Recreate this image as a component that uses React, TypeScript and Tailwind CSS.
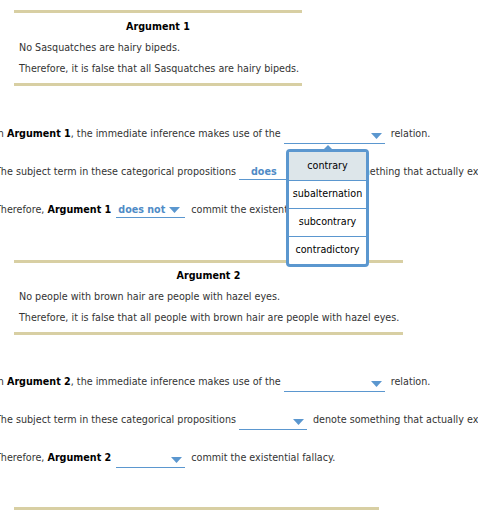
import React from 'react';

const Arrow = () => (
  <svg width="11" height="6" viewBox="0 0 11 6" className="shrink-0">
    <path d="M0 0 H11 L5.5 6 Z" fill="#5b97cf" />
  </svg>
);

type SelectProps = {
  width: string;
  value?: string;
  arrow?: boolean;
};

const Select = ({ width, value, arrow = true }: SelectProps) => (
  <span
    className={`inline-flex items-center h-[15px] border-b border-[#5b97cf] ${width}`}
  >
    <span className="flex-1 pl-[12px] font-bold text-[#4f8bc6]">{value}</span>
    {arrow && (
      <span className="pr-[3px]">
        <Arrow />
      </span>
    )}
  </span>
);

const ArgumentBox = ({
  title,
  lines,
  width,
  top,
}: {
  title: string;
  lines: string[];
  width: string;
  top: string;
}) => (
  <div
    className={`${width} border-y-[3px] border-[#d8cfa3] ${top} pb-[4px] whitespace-nowrap`}
  >
    <div className="h-[20px] leading-[20px] text-center font-bold text-black">
      {title}
    </div>
    {lines.map((l) => (
      <div key={l} className="h-[21px] leading-[21px] pl-[5px]">
        {l}
      </div>
    ))}
  </div>
);

const Row = ({ children }: { children: React.ReactNode }) => (
  <div className="flex items-center h-[38px] whitespace-nowrap ml-[-5px] pt-[1px]">
    {children}
  </div>
);

const options = ['contrary', 'subalternation', 'subcontrary', 'contradictory'];

export default function App() {
  return (
    <div
      className="relative w-[478px] h-[518px] overflow-hidden bg-white text-[9.6px] text-[#333]"
      style={{ fontFamily: '"DejaVu Sans", Verdana, sans-serif' }}
    >
      <div className="pt-[10px] pl-[14px]">
        <ArgumentBox
          width="w-[288px]"
          top="pt-[4px]"
          title="Argument 1"
          lines={[
            'No Sasquatches are hairy bipeds.',
            'Therefore, it is false that all Sasquatches are hairy bipeds.',
          ]}
        />
      </div>

      <div className="mt-[29px]">
        <Row>
          <span>
            In <b className="text-black">Argument 1</b>, the immediate inference makes use of the
          </span>
          <span className="ml-[3px] mr-[6px]">
            <Select width="w-[101px]" />
          </span>
          <span>relation.</span>
        </Row>
        <Row>
          <span>The subject term in these categorical propositions</span>
          <span className="ml-[3px] mr-[6px]">
            <Select width="w-[68px]" value="does" arrow={false} />
          </span>
          <span>denote something that actually exists.</span>
        </Row>
        <Row>
          <span>
            Therefore, <b className="text-black">Argument 1</b>
          </span>
          <span className="ml-[5px] mr-[6px]">
            <span className="inline-flex items-center gap-[4px] h-[15px] border-b border-[#5b97cf] w-[69px] pl-[2px]">
              <span className="font-bold text-[#4f8bc6]">does not</span>
              <Arrow />
            </span>
          </span>
          <span>commit the existential fallacy.</span>
        </Row>
      </div>

      <div className="mt-[31px] pl-[14px]">
        <ArgumentBox
          width="w-[389px]"
          top="pt-[3px]"
          title="Argument 2"
          lines={[
            'No people with brown hair are people with hazel eyes.',
            'Therefore, it is false that all people with brown hair are people with hazel eyes.',
          ]}
        />
      </div>

      <div className="mt-[28px]">
        <Row>
          <span>
            In <b className="text-black">Argument 2</b>, the immediate inference makes use of the
          </span>
          <span className="ml-[3px] mr-[6px]">
            <Select width="w-[101px]" />
          </span>
          <span>relation.</span>
        </Row>
        <Row>
          <span>The subject term in these categorical propositions</span>
          <span className="ml-[3px] mr-[6px]">
            <Select width="w-[68px]" />
          </span>
          <span>denote something that actually exists.</span>
        </Row>
        <Row>
          <span>
            Therefore, <b className="text-black">Argument 2</b>
          </span>
          <span className="ml-[5px] mr-[6px]">
            <Select width="w-[69px]" />
          </span>
          <span>commit the existential fallacy.</span>
        </Row>
      </div>

      <div className="mt-[30px] ml-[14px] w-[365px] h-[3px] bg-[#d8cfa3]" />

      {/* open dropdown menu */}
      <div className="absolute left-[286px] top-[149px] w-[83px]">
        <div className="absolute left-1/2 -top-[4px] -ml-[5px] w-0 h-0 border-x-[5px] border-x-transparent border-b-[5px] border-b-[#5b97cf]" />
        <div className="border-[3px] border-[#5b97cf] rounded-[4px] bg-white overflow-hidden text-black">
          {options.map((o, i) => (
            <div
              key={o}
              className={`h-[28px] flex items-center justify-center ${
                i > 0 ? 'border-t border-[#5b97cf]' : 'bg-[#dde6ea]'
              }`}
            >
              {o}
            </div>
          ))}
        </div>
      </div>
    </div>
  );
}
